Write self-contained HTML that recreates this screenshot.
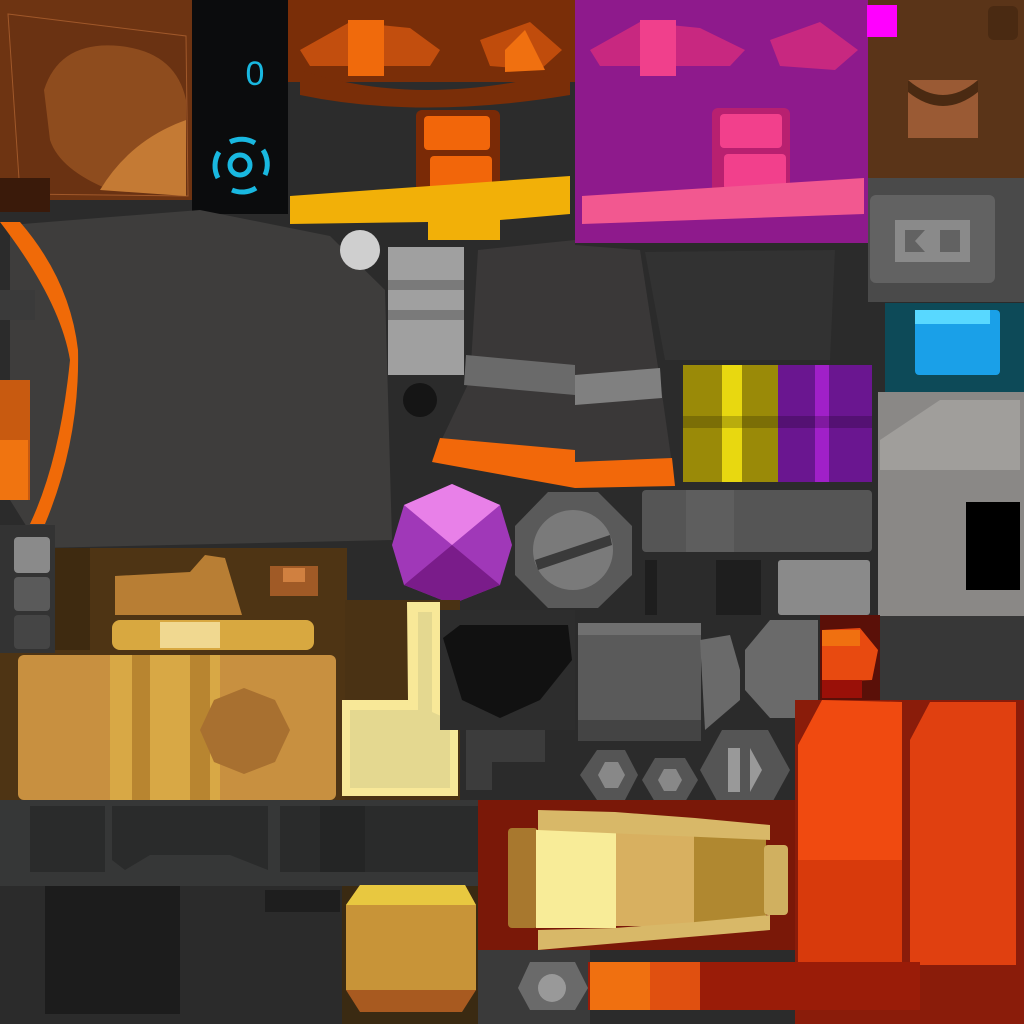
<!DOCTYPE html>
<html><head><meta charset="utf-8"><style>html,body{margin:0;padding:0;background:#2a2a2a}svg{display:block}</style></head>
<body>
<svg width="1024" height="1024" viewBox="0 0 1024 1024" xmlns="http://www.w3.org/2000/svg">
<rect width="1024" height="1024" fill="#2b2b2b"/>
<!-- top-left brown -->
<rect x="0" y="0" width="192" height="200" fill="#6e3412"/>
<path d="M8 14 L186 36 L188 196 L20 194 Z" fill="#6a3212" stroke="#a0582a" stroke-width="1"/>
<path d="M44 90 Q60 40 120 46 Q176 52 186 100 L186 130 Q150 150 130 190 L110 190 Q60 170 50 140 Z" fill="#8e4c1e"/>
<path d="M100 190 Q130 140 186 120 L186 196 Z" fill="#c47a34"/>
<rect x="0" y="178" width="50" height="34" fill="#3a1a0a"/>
<!-- black panel -->
<rect x="192" y="0" width="96" height="214" fill="#0b0c0d"/>
<text x="255" y="85" font-family="Liberation Sans, sans-serif" font-size="34" fill="#19b8e0" text-anchor="middle">0</text>
<g stroke="#19b8e0" stroke-width="5" fill="none">
<circle cx="240" cy="165" r="10"/>
<path d="M230 142 A26 26 0 0 1 255 143"/><path d="M263 150 A26 26 0 0 1 265 175"/>
<path d="M256 188 A26 26 0 0 1 232 190"/><path d="M218 178 A26 26 0 0 1 219 152"/>
</g>
<!-- orange/black top -->
<rect x="288" y="0" width="287" height="82" fill="#7a2e08"/>
<path d="M300 50 L350 22 L410 28 L440 50 L430 66 L310 66 Z" fill="#c24e0e"/>
<rect x="348" y="20" width="36" height="56" fill="#f06a0c"/>
<path d="M480 40 L530 22 L562 50 L540 70 L490 66 Z" fill="#c04c0c"/>
<path d="M505 50 L525 30 L545 70 L505 72 Z" fill="#f07010"/>
<path d="M290 82 L575 82 L575 240 L290 240 Z" fill="#2c2c2c"/>
<path d="M300 70 Q420 110 570 70 L570 95 Q420 120 300 95 Z" fill="#7a2e08"/>
<rect x="416" y="110" width="84" height="86" rx="6" fill="#7a2a06"/>
<rect x="424" y="116" width="66" height="34" rx="4" fill="#f2660a"/>
<rect x="430" y="156" width="62" height="34" rx="4" fill="#f2660a"/>
<path d="M290 196 L570 176 L570 214 L500 220 L500 240 L428 240 L428 222 L290 224 Z" fill="#f2b008"/>
<!-- magenta -->
<rect x="575" y="0" width="293" height="243" fill="#8e1a8c"/>
<path d="M590 50 L640 22 L700 28 L745 50 L730 66 L600 66 Z" fill="#c82880"/>
<rect x="640" y="20" width="36" height="56" fill="#f0408c"/>
<path d="M770 40 L820 22 L858 50 L835 70 L780 66 Z" fill="#c82880"/>
<rect x="712" y="108" width="78" height="88" rx="6" fill="#b82070"/>
<rect x="720" y="114" width="62" height="34" rx="4" fill="#f2408c"/>
<rect x="724" y="154" width="62" height="36" rx="4" fill="#f2408c"/>
<path d="M582 196 L864 178 L864 214 L582 224 Z" fill="#f25890"/>
<!-- brown right -->
<rect x="868" y="0" width="156" height="178" fill="#5a3418"/>
<rect x="867" y="5" width="30" height="32" fill="#ff00ff"/>
<rect x="988" y="6" width="30" height="34" rx="6" fill="#4a2a12"/>
<path d="M908 80 L978 80 L978 138 L908 138 Z" fill="#9a5a34"/>
<path d="M908 80 Q943 110 978 80 L978 92 Q943 120 908 92 Z" fill="#4a2a12"/>
<rect x="868" y="178" width="156" height="124" fill="#4a4a4a"/>
<rect x="870" y="195" width="125" height="88" rx="6" fill="#626262"/>
<path d="M895 220 L970 220 L970 262 L895 262 Z" fill="#8a8a8a"/>
<path d="M905 230 L925 230 L915 241 L925 252 L905 252 Z" fill="#626262"/>
<rect x="940" y="230" width="20" height="22" fill="#626262"/>
<rect x="885" y="303" width="139" height="90" fill="#0d4a58"/>
<rect x="915" y="310" width="85" height="65" rx="4" fill="#1aa0e8"/>
<rect x="915" y="310" width="75" height="14" fill="#58d8ff"/>
<rect x="878" y="392" width="146" height="224" fill="#8a8886"/>
<path d="M880 440 L940 400 L1020 400 L1020 470 L880 470 Z" fill="#a09e9b"/>
<rect x="966" y="502" width="54" height="88" fill="#000"/>
<rect x="880" y="616" width="144" height="90" fill="#373737"/>
<!-- big gray blob -->
<path d="M10 225 L200 210 L330 236 L385 290 L392 540 L40 548 L10 500 Z" fill="#3e3d3c"/>
<path d="M0 222 Q60 300 70 360 Q60 460 30 524 L45 524 Q80 440 78 350 Q70 280 20 222 Z" fill="#f06a08"/>
<path d="M0 290 L35 290 L35 320 L0 320 Z" fill="#3a3a3a"/>
<rect x="0" y="380" width="30" height="120" fill="#c85a10"/>
<rect x="0" y="440" width="28" height="60" fill="#f07410"/>
<circle cx="360" cy="250" r="20" fill="#cfcfcf"/>
<rect x="388" y="247" width="76" height="128" fill="#a0a0a0"/>
<rect x="388" y="280" width="76" height="10" fill="#7a7a7a"/><rect x="388" y="310" width="76" height="10" fill="#7a7a7a"/>
<circle cx="420" cy="400" r="17" fill="#151515"/>
<!-- pants -->
<path d="M478 250 L575 240 L575 460 L432 460 L470 380 Z" fill="#3a3838"/>
<path d="M466 355 L575 365 L575 395 L464 385 Z" fill="#6a6a6a"/>
<path d="M440 438 L575 450 L575 488 L432 462 Z" fill="#f2680a"/>
<path d="M575 245 L640 250 L660 380 L675 485 L575 485 Z" fill="#3a3838"/>
<path d="M575 375 L660 368 L662 398 L575 405 Z" fill="#808080"/>
<path d="M575 462 L672 458 L675 486 L575 488 Z" fill="#f2680a"/>
<path d="M645 252 L835 250 L830 360 L665 360 Z" fill="#323232"/>
<!-- yellow/purple -->
<rect x="683" y="365" width="95" height="117" fill="#9a8a08"/>
<rect x="722" y="365" width="20" height="117" fill="#e8d810"/>
<rect x="778" y="365" width="94" height="117" fill="#6a1690"/>
<rect x="815" y="365" width="14" height="117" fill="#a020c8"/>
<rect x="683" y="416" width="189" height="12" fill="#000" opacity=".2"/>
<!-- gem -->
<path d="M452 484 L500 505 L512 545 L500 585 L452 604 L404 585 L392 545 L404 505 Z" fill="#a038b8"/>
<path d="M452 484 L500 505 L452 545 L404 505 Z" fill="#e880e8"/>
<path d="M404 585 L452 545 L500 585 L452 604 Z" fill="#7a1c8a"/>
<!-- bolt -->
<path d="M548 492 L598 492 L632 526 L632 575 L598 608 L548 608 L515 575 L515 526 Z" fill="#5a5a5a"/>
<circle cx="573" cy="550" r="40" fill="#7a7a7a"/>
<path d="M535 560 L610 535 L612 545 L538 570 Z" fill="#3a3a3a"/>
<rect x="642" y="490" width="230" height="62" rx="4" fill="#555"/>
<rect x="686" y="490" width="48" height="62" fill="#5e5e5e"/>
<rect x="645" y="560" width="12" height="55" fill="#1e1e1e"/>
<rect x="716" y="560" width="45" height="55" fill="#1e1e1e"/>
<rect x="778" y="560" width="92" height="55" rx="3" fill="#8a8a8a"/>
<!-- left small -->
<rect x="0" y="525" width="55" height="128" fill="#333"/>
<rect x="14" y="537" width="36" height="36" rx="4" fill="#8a8a8a"/>
<rect x="14" y="577" width="36" height="34" rx="4" fill="#5a5a5a"/>
<rect x="14" y="615" width="36" height="34" rx="4" fill="#454545"/>
<!-- gold area -->
<rect x="55" y="548" width="292" height="108" fill="#4e3414"/>
<rect x="55" y="548" width="35" height="102" fill="#3e2a10"/>
<path d="M115 576 L190 572 L205 555 L225 558 L242 615 L115 615 Z" fill="#b87e34"/>
<rect x="270" y="566" width="48" height="30" fill="#a05a26"/>
<rect x="283" y="568" width="22" height="14" fill="#d08040"/>
<rect x="112" y="620" width="202" height="30" rx="8" fill="#d8a840"/>
<rect x="160" y="622" width="60" height="26" fill="#f0d890"/>
<rect x="0" y="653" width="345" height="150" fill="#4e3414"/>
<rect x="18" y="655" width="318" height="145" rx="6" fill="#c89040"/>
<rect x="110" y="655" width="110" height="145" fill="#d8a845"/>
<rect x="132" y="655" width="18" height="145" fill="#b88530"/>
<rect x="190" y="655" width="20" height="145" fill="#b88530"/>
<path d="M244 688 L275 700 L290 730 L275 762 L244 774 L214 762 L200 730 L214 700 Z" fill="#a87030"/>
<rect x="345" y="600" width="115" height="200" fill="#4a3214"/>
<path d="M407 602 L440 602 L440 705 L458 712 L458 796 L342 796 L342 700 L408 700 Z" fill="#f8e898"/>
<path d="M418 612 L432 612 L432 712 L450 720 L450 788 L350 788 L350 710 L418 710 Z" fill="#e4d890"/>
<!-- dark middle -->
<rect x="440" y="610" width="135" height="120" fill="#2d2d2d"/>
<path d="M443 638 L460 625 L568 625 L572 660 L540 700 L500 718 L462 700 Z" fill="#111"/>
<path d="M466 730 L545 730 L545 762 L492 762 L492 790 L466 790 Z" fill="#3c3c3c"/>
<rect x="578" y="623" width="123" height="118" rx="8" fill="#5a5a5a"/>
<rect x="578" y="623" width="123" height="12" fill="#707070"/>
<rect x="578" y="720" width="123" height="21" fill="#444"/>
<path d="M700 640 L730 635 L740 670 L740 700 L705 730 Z" fill="#6a6a6a"/>
<path d="M745 650 L770 620 L818 620 L818 718 L770 718 L745 690 Z" fill="#6a6a6a"/>
<path d="M580 775 L597 750 L625 750 L638 775 L625 800 L597 800 Z" fill="#555"/>
<path d="M598 775 L605 762 L618 762 L625 775 L618 788 L605 788 Z" fill="#888"/>
<path d="M642 780 L655 758 L685 758 L698 780 L685 802 L655 802 Z" fill="#555"/>
<path d="M658 780 L664 769 L676 769 L682 780 L676 791 L664 791 Z" fill="#888"/>
<path d="M700 770 L722 730 L768 730 L790 770 L768 810 L722 810 Z" fill="#555"/>
<path d="M728 748 L740 748 L740 792 L728 792 Z M750 748 L762 770 L750 792 Z" fill="#999"/>
<!-- red area -->
<rect x="820" y="615" width="60" height="90" fill="#5a1008"/>
<path d="M822 630 L860 628 L878 650 L872 680 L822 682 Z" fill="#e84a10"/>
<rect x="822" y="630" width="38" height="16" fill="#f07010"/>
<rect x="822" y="680" width="40" height="18" fill="#9a1008"/>
<rect x="795" y="700" width="229" height="324" fill="#8a1c0a"/>
<path d="M798 745 L822 700 L902 702 L902 965 L798 965 Z" fill="#f04a10"/>
<path d="M910 740 L930 702 L1016 702 L1016 965 L910 965 Z" fill="#e04010"/>
<path d="M798 860 L902 860 L902 965 L798 965 Z" fill="#d83a0c"/>
<!-- bottom strip dark -->
<rect x="0" y="800" width="505" height="86" fill="#363737"/>
<rect x="30" y="806" width="75" height="66" fill="#2a2b2b"/>
<path d="M112 806 L268 806 L268 870 L230 855 L150 855 L125 870 L112 860 Z" fill="#2a2b2b"/>
<rect x="280" y="806" width="210" height="66" fill="#2a2b2b"/>
<rect x="320" y="806" width="45" height="66" fill="#242525"/>
<rect x="0" y="886" width="340" height="138" fill="#2b2b2b"/>
<rect x="45" y="886" width="135" height="128" fill="#1c1c1c"/>
<rect x="265" y="890" width="75" height="22" fill="#1e1e1e"/>
<rect x="342" y="886" width="136" height="138" fill="#3a2a12"/>
<path d="M346 905 L360 885 L465 885 L476 905 L476 990 L346 990 Z" fill="#c89438"/>
<path d="M346 905 L360 885 L465 885 L476 905 Z" fill="#e8c840"/>
<path d="M346 990 L476 990 L462 1012 L360 1012 Z" fill="#a85a20"/>
<!-- bandage -->
<rect x="478" y="800" width="317" height="150" fill="#7a1808"/>
<rect x="508" y="828" width="30" height="100" rx="4" fill="#a8782e"/>
<rect x="536" y="830" width="80" height="98" fill="#f8ec98"/>
<rect x="616" y="832" width="78" height="94" fill="#d8b060"/>
<rect x="694" y="836" width="72" height="86" fill="#b08830"/>
<rect x="764" y="845" width="24" height="70" rx="4" fill="#d0b060"/>
<path d="M538 810 L615 812 L695 818 L770 825 L770 840 L538 830 Z" fill="#d8b868"/>
<path d="M538 930 L615 928 L695 922 L770 915 L770 930 L538 950 Z" fill="#d8b868"/>
<rect x="478" y="950" width="112" height="74" fill="#3a3a3a"/>
<path d="M518 988 L530 962 L575 962 L588 988 L575 1010 L530 1010 Z" fill="#6a6a6a"/>
<circle cx="552" cy="988" r="14" fill="#999"/>
<rect x="588" y="962" width="332" height="48" fill="#9a1c08"/>
<path d="M590 962 L675 962 L700 975 L700 1010 L590 1010 Z" fill="#f07010"/>
<rect x="650" y="962" width="50" height="48" fill="#e05010"/>
</svg>
</body></html>
